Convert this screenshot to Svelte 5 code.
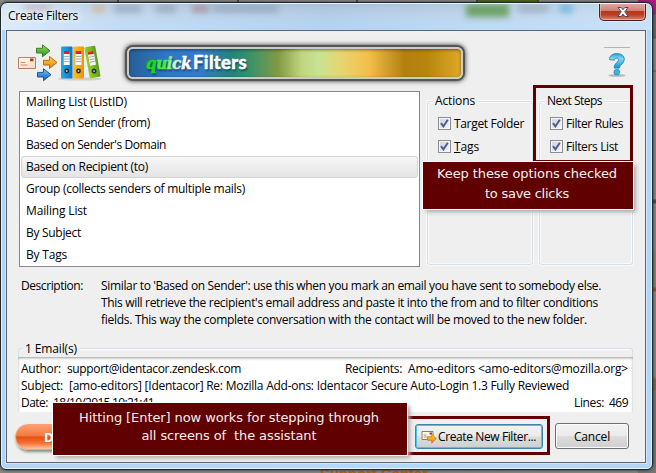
<script>
  const choices = [
    { text: 'Mailing List (ListID)', w: 101 },
    { text: 'Based on Sender (from)', w: 124 },
    { text: "Based on Sender's Domain", w: 140 },
    { text: 'Based on Recipient (to)', w: 122, selected: true },
    { text: 'Group (collects senders of multiple mails)', w: 219 },
    { text: 'Mailing List', w: 61 },
    { text: 'By Subject', w: 55 },
    { text: 'By Tags', w: 41 }
  ];
  const groups = [
    { title: 'Actions', w: 40, options: [{ text: 'Target Folder', w: 70 }, { text: 'Tags', w: 25, key: true }] },
    { title: 'Next Steps', w: 55, options: [{ text: 'Filter Rules', w: 57 }, { text: 'Filters List', w: 52 }] }
  ];
  const description = [
    { text: "Similar to 'Based on Sender': use this when you mark an email you have sent to somebody else.", w: 500 },
    { text: "This will retrieve the recipient's email address and paste it into the from and to filter conditions", w: 497 },
    { text: 'fields. This way the complete conversation with the contact will be moved to the new folder.', w: 486 }
  ];

  // Spread the letters so that a label takes up the given width.
  function fit(node, width) {
    const natural = node.getBoundingClientRect().width;
    const gap = (width - natural) / node.textContent.length;
    node.style.letterSpacing = `${gap}px`;
  }
</script>

<div class="desktop">
  <div class="tabs"><i></i><i></i><i></i><i></i><i></i><i></i></div>
  <div class="edge"></div>
  <div class="behind"><span use:fit={108}>Support Center</span></div>

  <div class="window">
    <div class="titlebar">
      <div class="haze"><i class="a"></i><i class="b"></i><i class="c"></i><i class="d"></i><i class="e"></i><i class="f"></i><i class="g"></i><i class="h"></i></div>
      <span class="title" use:fit={70}>Create Filters</span>
      <button class="close" aria-label="Close">
        <svg width="14" height="12" viewBox="0 0 14 12"><path d="M2 1.5h3.2L7 3.7l1.8-2.2H12L8.8 5.8 12.2 10.5H8.8L7 8.1 5.2 10.5H1.8L5.2 5.8z" fill="#fff" stroke="#4c4a57" stroke-width="1" /></svg>
      </button>
    </div>

    <div class="client">
      <header>
        <svg class="logo" width="86" height="40" viewBox="0 0 86 40">
          <defs>
            <linearGradient id="gr" x2="0" y2="1"><stop stop-color="#a2e060" /><stop offset="1" stop-color="#258b1b" /></linearGradient>
            <linearGradient id="or" x2="0" y2="1"><stop stop-color="#ffd83c" /><stop offset="1" stop-color="#ee7913" /></linearGradient>
            <linearGradient id="bl" x2="0" y2="1"><stop stop-color="#79c8ff" /><stop offset="1" stop-color="#1256b5" /></linearGradient>
            <linearGradient id="env" x2="1" y2="1"><stop stop-color="#fffdf7" /><stop offset="1" stop-color="#f2d9bd" /></linearGradient>
            <linearGradient id="bb" x2="1"><stop stop-color="#2ba8e8" /><stop offset="1" stop-color="#0874ba" /></linearGradient>
            <linearGradient id="bo" x2="1"><stop stop-color="#ffc21c" /><stop offset="1" stop-color="#ef9207" /></linearGradient>
            <linearGradient id="bg" x2="1"><stop stop-color="#98d12c" /><stop offset="1" stop-color="#5d9d15" /></linearGradient>
            <g id="label"><path d="M3 5h6v14H3z" fill="#f7f7f5" /><path d="M3 5h6v3H3z" fill="#e32320" /><path d="M3.5 10.5h5M3.5 13h5M3.5 15.5h5" stroke="#a5adb0" stroke-width="1" /><circle cx="6" cy="25" r="2.4" fill="#222a2e" /><circle cx="6" cy="25" r=".9" fill="#c4cdd0" /></g>
          </defs>
          <path d="M1.5 14.5h17v11h-17z" fill="url(#env)" stroke="#b28363" />
          <path d="M3.5 19.5h5M3.5 22h7" stroke="#bf9478" /><path d="M13 15.5h3.5v2.8H13z" fill="#a13e2e" />
          <path d="M19.5 5.3h6V1.8l7.5 6-7.5 6V10h-6z" fill="url(#gr)" stroke="#367d2a" />
          <path d="M26.5 17.3h6V13.5l7.5 6-7.5 6V22h-6z" fill="url(#or)" stroke="#bd671c" />
          <path d="M20.5 29.4h6V25.7l7.5 6-7.5 6V34h-6z" fill="url(#bl)" stroke="#22569b" />
          <ellipse cx="63" cy="36" rx="22" ry="1.6" fill="#bbb" opacity=".6" />
          <rect x="44" y="3.5" width="11.5" height="32" rx="1" fill="url(#bb)" /><use href="#label" x="43.7" y="3" />
          <rect x="56" y="3.5" width="11" height="32" rx="1" fill="url(#bo)" /><use href="#label" x="55.5" y="3" />
          <g transform="translate(67.3 4.4) rotate(-10)"><rect width="11" height="31.5" rx="1" fill="url(#bg)" /><use href="#label" x="-.5" /></g>
        </svg>
        <div class="banner"><em use:fit={45}><b class="q1">q</b><b class="q2">u</b><b class="q3">i</b><b class="q4">c</b><b class="q5">k</b></em><strong use:fit={54}>Filters</strong></div>
        <div class="help">
          <svg width="20" height="27" viewBox="0 0 20 27">
            <defs><linearGradient id="qm" x2="0" y2="1"><stop stop-color="#2e9fd6" /><stop offset=".35" stop-color="#7cd8fa" /><stop offset="1" stop-color="#1592cf" /></linearGradient></defs>
            <ellipse cx="10" cy="23.5" rx="8.5" ry="1.3" fill="#b4b4b4" />
            <path d="M2.5 7.6C2.5 3.8 5.4 1.6 9.7 1.6c4.6 0 7.6 2.2 7.6 5.7 0 4.6-4.7 5-4.9 8.8H7.2c-.2-5.2 4.3-5.6 4.3-8.1 0-1.2-.8-1.8-2-1.8-1.3 0-2 .7-2.1 2z" fill="url(#qm)" stroke="#2886b5" stroke-width=".9" />
            <circle cx="9.8" cy="20.2" r="2.9" fill="#35b4e8" stroke="#2886b5" stroke-width=".7" />
          </svg>
        </div>
      </header>

      <section class="pick">
        <ul>
          {#each choices as c}
            <li class:selected={c.selected}><span use:fit={c.w}>{c.text}</span></li>
          {/each}
        </ul>
        {#each groups as g}
          <div class="group">
            <h3><span use:fit={g.w}>{g.title}</span></h3>
            {#each g.options as o}
              <div class="option">
                <span class="box"><svg width="9" height="9" viewBox="0 0 9 9"><path d="M1 4.2 3.4 7.4 7.8.8" fill="none" stroke="#4a5f97" stroke-width="2" /></svg></span>
                <span use:fit={o.w}>{#if o.key}<u>T</u>ags{:else}{o.text}{/if}</span>
              </div>
            {/each}
          </div>
        {/each}
      </section>

      <section class="description">
        <div class="term"><span use:fit={62}>Description:</span></div>
        <div>
          {#each description as d}<div class="line"><span use:fit={d.w}>{d.text}</span></div>{/each}
        </div>
      </section>

      <section class="emails">
        <h3><span use:fit={52}>1 Email(s)</span></h3>
        <div class="mail">
          <div class="line"><span><span class="k" use:fit={40}>Author:</span><span style:margin-left="6px" use:fit={174}>support@identacor.zendesk.com</span></span><span class="right"><span use:fit={57}>Recipients:</span><span style:margin-left="6px" use:fit={220}>Amo-editors &lt;amo-editors@mozilla.org&gt;</span></span></div>
          <div class="line"><span><span use:fit={42}>Subject:</span><span style:margin-left="6px" use:fit={500}>[amo-editors] [Identacor] Re: Mozilla Add-ons: Identacor Secure Auto-Login 1.3 Fully Reviewed</span></span></div>
          <div class="line"><span><span use:fit={27}>Date:</span><span style:margin-left="5px" use:fit={101}>18/10/2015 10:21:41</span></span><span class="count"><span use:fit={30}>Lines:</span><span style:margin-left="5px" use:fit={19}>469</span></span></div>
        </div>
      </section>

      <footer>
        <button class="donate">Donate</button>
        <button class="create">
          <svg width="16" height="14" viewBox="0 0 16 14"><path d="M1 1.5h11v8H1z" fill="#fffaf1" stroke="#9b755f" /><path d="M8.5 2.5h2.5v2H8.5z" fill="#973729" /><path d="M2.5 5h3M2.5 7h4" stroke="#b58c70" /><path d="M6.5 6.7h4.2V4l4.6 4.6-4.6 4.5v-2.8H6.5z" fill="url(#or)" stroke="#c2781c" stroke-width=".8" /></svg>
          <span use:fit={98}>Create New Filter...</span>
        </button>
        <button class="cancel"><span use:fit={36}>Cancel</span></button>
      </footer>
    </div>
  </div>

  <div class="mark steps"></div>
  <div class="mark go"></div>
  <div class="callout keep"><div><span use:fit={180}>Keep these options checked</span></div><div><span use:fit={84}>to save clicks</span></div></div>
  <div class="callout enter"><div><span use:fit={300}>Hitting [Enter] now works for stepping through</span></div><div><span use:fit={175}>all screens of&nbsp; the assistant</span></div></div>
</div>

<style>
  .desktop { position: relative; width: 656px; height: 473px; overflow: hidden; box-sizing: border-box; background: #868686; font: 12px/17px 'Open Sans', 'Noto Sans', sans-serif; color: #000; white-space: nowrap; }
  .desktop * { box-sizing: border-box; }
  span, em, strong { display: inline-block; }
  button { padding: 0; font: inherit; color: inherit; }
  h3 { margin: 0; font: inherit; }
  .tabs { position: absolute; inset: 0 0 auto 0; height: 3px; display: flex; gap: 2px; background: #484848; }
  .tabs i { flex: 1; background: #888; }
  .tabs i:nth-child(5) { flex: .5; background: #4e6b17; }
  .edge { position: absolute; right: 0; top: 0; width: 18px; height: 473px; background: linear-gradient(#a91c80 0 14px, #666 15px 37px, #555 38px, #858585 39px 70px, #555 71px, #858585 72px 199px, #4d4d4d 200px 203px, #858585 204px 251px, #848563 252px 287px, #a4520b 288px 291px, #858585 292px 376px, #806830 380px 390px, #757575 391px); }
  .behind { position: absolute; left: 320px; top: 465px; font: bold 15px/17px 'Liberation Sans', Arial, sans-serif; color: #b55e0c; }

  .window { position: absolute; left: 0; top: 2px; width: 653px; height: 468px; border: 1px solid #20272c; border-radius: 7px 7px 6px 6px; background: linear-gradient(90deg, #b4d3f2, #b7d7f6 50%, #b3d4f3); box-shadow: inset 0 0 0 1px #e5f5ff, 0 0 3px #222; padding: 0 6px 6px 5px; display: flex; flex-direction: column; }
  .titlebar { position: relative; height: 26px; margin: 1px -5px 0 -4px; padding: 0 5px 0 6px; display: flex; justify-content: space-between; flex: none; overflow: hidden; border-radius: 5px 5px 0 0; background: linear-gradient(90deg, rgba(235,246,255,.7), rgba(240,248,255,.25) 18%, transparent 50%, rgba(225,240,253,.5)), linear-gradient(#a9bfd7, #b5cfea 45%, #b2d4f6); }
  .haze { position: absolute; inset: 0; filter: blur(3px); }
  .haze i { position: absolute; top: 0; height: 9px; opacity: .5; background: #8193a7; }
  .haze .a { left: 22px; width: 27px; background: #b2858e; opacity: .35; }
  .haze .b { left: 90px; width: 13px; background: #d6a973; }
  .haze .c { left: 112px; width: 27px; }
  .haze .d { left: 154px; width: 20px; }
  .haze .e { left: 190px; width: 17px; background: #9a6e74; }
  .haze .f { left: 211px; width: 65px; }
  .haze .g { left: 464px; width: 43px; height: 13px; background: #5f9a50; opacity: .85; }
  .haze .h { left: 516px; width: 55px; background: linear-gradient(90deg, #8999ab 55%, #b6d3ef 56% 75%, #399fd0 76%); }
  .title { position: relative; align-self: flex-start; margin-top: 3px; text-shadow: 0 0 5px #fff, 0 0 8px #fff, 0 0 8px #fff; }
  .close { position: relative; width: 47px; height: 18px; margin-top: -1px; border: 1px solid #4b1e24; border-top: 0; border-radius: 0 0 5px 5px; display: flex; align-items: center; justify-content: center; background: linear-gradient(#dfaca4, #cf8174 45%, #b7361f 48%, #bd3e25 70%, #dd8870); box-shadow: inset 0 0 0 1px #f0bcb3aa, 0 0 2px #fff; }

  .client { flex: 1; min-height: 0; border: 1px solid #5b6573; background: #efefef; box-shadow: 0 0 0 1px #d8efffaa; display: flex; flex-direction: column; }
  header { height: 60px; flex: none; display: flex; align-items: flex-start; padding: 12px 15px 0 10px; }
  .logo { flex: none; }
  .banner { width: 336px; height: 32px; margin: 4px 0 0 24px; border: 2px solid #c9ccca; border-radius: 6px; display: flex; align-items: center; padding-left: 17px; background: linear-gradient(90deg, #275f98, #3078c8 12%, #3579cc 21%, #26837a 31%, #36916b 36%, #829a43 45%, #c0d580 52%, #c8e393 57%, #e7d56f 64%, #f4bf4d 72%, #b1800f 83%, #b6860e 90%, #dfa928); box-shadow: 0 0 0 2px #555, 0 0 5px 2px #333, inset 0 1px 3px #0007; text-shadow: 1px 2px 2px #123a; }
  .banner em { font: italic bold 17px/28px 'DejaVu Serif', serif; font-stretch: condensed; }
  .banner b { font-weight: bold; -webkit-text-stroke: .5px; }
  .q1 { color: #16df16; } .q2 { color: #45ed3b; } .q3 { color: #8bee80; } .q4 { color: #caf4cb; } .q5 { color: #fff; }
  .banner strong { margin: -3px 0 0 2px; font: bold 18.5px/28px 'Lato', sans-serif; color: #fff; -webkit-text-stroke: .6px #fff; }
  .help { margin: 4px 0 0 auto; width: 26px; height: 34px; border-top: 1px solid #b4b4b6; display: flex; justify-content: center; padding-top: 4px; }

  .pick { display: flex; height: 177px; padding: 0 12px; flex: none; }
  ul { list-style: none; margin: 0 7px 0 0; padding: 0 1px; width: 401px; height: 176px; border: 1px solid #828790; background: #fff; flex: none; }
  li { height: 22px; padding-left: 4px; line-height: 20px; border: 1px solid transparent; border-radius: 3px; }
  li:first-child { height: 20px; line-height: 18px; }
  li.selected { border-color: #d5d5d5; background: linear-gradient(#f7f7f7, #e4e4e4); }
  .group { width: 106px; height: 164px; margin: 10px 6px 0 0; border: 1px solid #d5dfe5; border-radius: 3px; box-shadow: inset 0 0 0 1px #f8fafb, 0 0 0 1px #f8fafb; flex: none; }
  .group + .group { width: 94px; margin-right: 0; }
  h3 { display: flex; height: 14px; margin: -9px 0 8px 5px; }
  h3 span { background: #efefef; box-shadow: -2px 0 #efefef, 3px 0 #efefef; margin-left: 2px; line-height: 16px; height: 16px; }
  .option { display: flex; align-items: center; height: 17px; margin: 0 0 6px 10px; gap: 3px; }
  .box { width: 13px; height: 13px; border: 1px solid #8a8e93; background: linear-gradient(135deg, #ccd2da, #f8f8f8); box-shadow: inset 0 0 0 1px #f6f6f6; display: flex; align-items: center; justify-content: center; flex: none; }

  .description { display: flex; padding: 9px 14px 0; height: 75px; flex: none; }
  .term { width: 80px; }
  .line { height: 17px; }
  .emails { margin: 5px 12px 0 11px; height: 64px; border: 1px solid #d5dfe5; border-bottom: 0; border-radius: 3px 3px 0 0; box-shadow: inset 0 1px #fafcfd; flex: none; }
  .emails h3 { margin: -8px 0 3px 5px; height: 13px; }
  .emails h3 span { margin-left: 1px; }
  .mail { margin: 0 -1px; height: 55px; padding: 3px 4px 0 3px; background: #fff; box-shadow: inset 0 3px 3px -2px #999, inset 2px 0 2px -1px #ddd, inset -2px 0 2px -1px #ddd; }
  .mail .line { display: flex; justify-content: space-between; }
  .mail .right { margin-right: 1px; }
  .mail .count { margin-right: 1px; }
  footer { display: flex; align-items: flex-start; padding: 11px 15px 0 8px; }
  footer button { height: 26px; border-radius: 3px; }
  .donate { width: 100px; margin-top: 1px; border: 1px solid #f3a47d; border-radius: 14px !important; background: linear-gradient(#ff9e6d, #f37a42 45%, #e55010 50%, #f27135 75%, #ffc6a3); color: #fff; font-weight: bold; font-size: 13px; text-align: left; padding-left: 28px; box-shadow: 1px 2px 3px #888; }
  .create { width: 128px; margin: 1px 0 0 300px; height: 25px !important; border: 1px solid #3b86a6; background: linear-gradient(#f2f2f2, #ebebeb 48%, #dcdcdc 52%, #cfcfcf); box-shadow: inset 0 0 0 1px #45c6ee; display: flex; align-items: center; padding-left: 5px; gap: 1px; flex: none; }
  .cancel { width: 74px; margin-left: 12px; border: 1px solid #707070; background: linear-gradient(#f2f2f2, #ebebeb 48%, #dddddd 52%, #cfcfcf); box-shadow: inset 0 0 0 1px #fafafa; flex: none; }

  .mark { position: absolute; border: 3px solid #600000; }
  .steps { left: 533px; top: 85px; width: 100px; height: 78px; }
  .go { left: 405px; top: 416px; width: 145px; height: 39px; }
  .callout { position: absolute; background: #600000; border: 1px solid #fff; color: #f8eeee; font: 13px/20px 'DejaVu Sans', Verdana, sans-serif; text-align: center; box-shadow: 3px 3px 4px -1px #aaa; }
  .keep { left: 422px; top: 161px; width: 212px; height: 49px; padding: 2px 2px 0 0; }
  .enter { left: 52px; top: 402px; width: 356px; height: 54px; padding: 6px 2px 0 0; line-height: 18px; }
</style>
